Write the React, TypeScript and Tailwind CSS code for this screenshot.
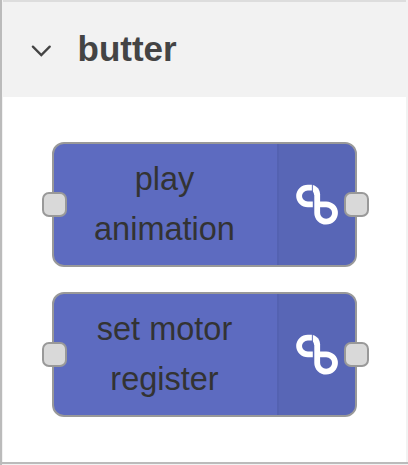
const Port = ({ side }: { side: "left" | "right" }) => (
  <span
    className={`absolute top-[48px] size-[25px] rounded-[7px] border-2 border-[#999] bg-[#d9d9d9] ${
      side === "left" ? "-left-[12px]" : "-right-[14px]"
    }`}
  />
);

const ButterIcon = () => (
  <svg width="44" height="42" viewBox="0 0 44 42" fill="none" stroke="#fff" strokeWidth="5.8">
    <path d="M17.2 3.7H12.8A8.7 8.3 0 0 0 4.1 12A8.7 8.3 0 0 0 12.8 20.3H17.8" />
    <path d="M25 20.3H31.2A8.9 8.7 0 1 1 22.2 29V10" />
    <path stroke="none" fill="#fff" d="M17.8 0.9C22.5 2.2 25.1 5.8 25.1 11H19.3L17.8 7.2Z" />
    <path d="M17.3 0V6.8L18.5 11V24" stroke="#5866b6" strokeWidth="0.6" />
  </svg>
);

const PaletteNode = ({ lines }: { lines: string[] }) => (
  <div className="relative flex h-[125px] w-[305px] rounded-[12px] border-2 border-[#999] bg-[#5d6bc0]">
    <div className="flex flex-1 flex-col items-center pt-[10px] pr-[2px] text-[32.5px] leading-[50px] text-[#333]">
      {lines.map((line) => (
        <span key={line} className="whitespace-nowrap">
          {line}
        </span>
      ))}
    </div>
    <div className="w-[78px] rounded-r-[10px] border-l-2 border-[#5462b1] bg-[#5866b6] pt-[40px] pl-[16px]">
      <ButterIcon />
    </div>
    <Port side="left" />
    <Port side="right" />
  </div>
);

export default function App() {
  return (
    <div className="flex h-[465px] w-[408px] flex-col overflow-hidden border-l-2 border-[#bbb] bg-[#f2f2f2] font-['Liberation_Sans',Arial,sans-serif]">
      <div className="flex h-[464px] shrink-0 flex-col border-b-2 border-[#bbb]">
        <div className="mr-[2px] ml-px flex h-[97px] shrink-0 items-center border-t-2 border-[#ddd] bg-[#f2f2f2]">
          <svg className="mt-[2px] ml-[28px]" width="20" height="12" viewBox="0 0 20 12" fill="none" stroke="#444" strokeWidth="2.3" strokeLinecap="round" strokeLinejoin="miter">
            <path d="M1.9 1.6L10.3 10L18.7 1.6" />
          </svg>
          <h1 className="mb-[2px] ml-[26.5px] text-[35px] leading-[40px] font-bold text-[#444]">butter</h1>
        </div>
        <div className="mr-[2px] ml-px flex flex-1 flex-col gap-[25px] bg-white pt-[45px] pl-[49px]">
          <PaletteNode lines={["play", "animation"]} />
          <PaletteNode lines={["set motor", "register"]} />
        </div>
      </div>
    </div>
  );
}
